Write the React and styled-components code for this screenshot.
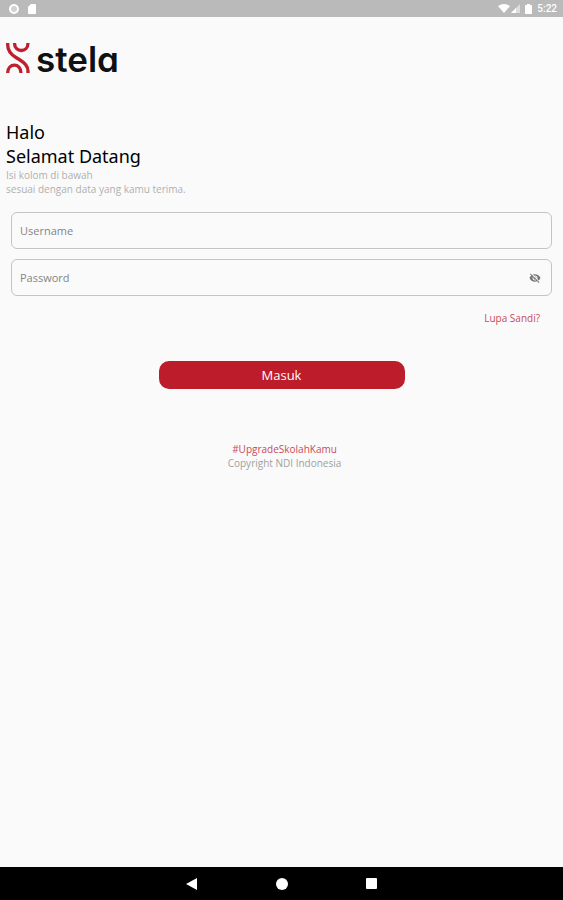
import React from "react";
import styled, { createGlobalStyle } from "styled-components";

const GlobalStyle = createGlobalStyle`
  *, *::before, *::after { box-sizing: border-box; }
  body {
    margin: 0;
    background: #fafafa;
    font-family: "Open Sans", "Noto Sans", sans-serif;
  }
`;

const Screen = styled.div`
  display: flex;
  flex-direction: column;
  min-height: 100vh;
`;

const StatusBar = styled.header`
  display: flex;
  align-items: center;
  justify-content: space-between;
  height: 17px;
  padding: 0 6px 0 8px;
  background: #bababa;
  color: #fff;
`;

const StatusGroup = styled.div`
  display: flex;
  align-items: center;
  gap: ${(p) => p.$gap}px;
  svg { display: block; }
`;

const Clock = styled.time`
  font: 500 10px/16px Roboto, sans-serif;
`;

const Content = styled.main`
  flex: 1;
  display: flex;
  flex-direction: column;
  padding: 24px 6px;
`;

const Brand = styled.div`
  display: flex;
  align-items: center;
  gap: 5px;
  height: 36px;
`;

const Wordmark = styled.span`
  font: 600 35px/36px Inter, sans-serif;
  font-feature-settings: "cv11";
  color: #111;
`;

const Title = styled.h1`
  margin: 43px 0 0;
  font-family: "Noto Sans", "Open Sans", sans-serif;
  font-size: 18px;
  line-height: 24px;
  font-weight: 400;
  color: #000;
`;

const Note = styled.p`
  margin: 0;
  font-size: 10px;
  line-height: 14px;
  color: ${(p) => p.$color || "#b0b0b0"};
`;

const Form = styled.form`
  display: flex;
  flex-direction: column;
  padding: 16px 5px 0;
`;

const Field = styled.div`
  display: flex;
  align-items: center;
  height: 37px;
  margin-bottom: 10px;
  padding: 0 10px 0 8px;
  border: 1px solid #c4c4c4;
  border-radius: 6px;
`;

const Input = styled.input`
  flex: 1;
  min-width: 0;
  padding: 0;
  border: 0;
  outline: 0;
  background: transparent;
  font: 400 11px/18px "Open Sans", sans-serif;
  color: #333;
  &::placeholder { color: #858585; opacity: 1; }
`;

const IconButton = styled.button`
  display: flex;
  padding: 0;
  border: 0;
  background: none;
  color: #777;
`;

const ForgotLink = styled.a`
  align-self: flex-end;
  margin: 5px 12px 0 0;
  font-size: 10px;
  line-height: 14px;
  color: #c94a57;
  text-decoration: none;
`;

const SubmitButton = styled.button`
  align-self: center;
  width: 60%;
  max-width: 246px;
  height: 28px;
  margin-top: 36px;
  padding: 0;
  border: 0;
  border-radius: 10px;
  background: #bd1c2b;
  color: #fff;
  font: 500 13px/18px "Open Sans", sans-serif;
`;

const Footer = styled.footer`
  margin-top: 53px;
  padding-left: 6px;
  text-align: center;
`;

const NavBar = styled.nav`
  display: flex;
  align-items: center;
  justify-content: center;
  gap: 66px;
  height: 33px;
  background: #000;
`;

const NavButton = styled.button`
  display: flex;
  justify-content: center;
  width: 24px;
  padding: 0;
  border: 0;
  background: none;
`;

const LogoMark = () => (
  <svg width="25" height="32" viewBox="0 0 25 32" fill="none" stroke="#c01f2e" strokeWidth="3.3" aria-hidden="true">
    <path d="M1.700 0V2C1.700 8 5 11.500 10 14.500L14 17C19 20 22 23 22 28V30" />
    <path d="M8.500 0C8.500 10 22 10 22 0" />
    <path d="M1.700 30C1.700 19.500 15 19.500 15 30" />
  </svg>
);

const HiddenEye = () => (
  <svg width="12" height="12" viewBox="0 0 24 24" aria-hidden="true">
    <path fill="currentColor" d="M12 7c2.760 0 5 2.240 5 5 0 .65-.13 1.260-.36 1.830l2.920 2.920c1.510-1.260 2.700-2.890 3.430-4.750-1.730-4.390-6-7.500-11-7.500-1.400 0-2.740.25-3.980.7l2.160 2.160C10.740 7.130 11.350 7 12 7zM2 4.270l2.280 2.280.46.46C3.080 8.300 1.780 10.020 1 12c1.730 4.390 6 7.500 11 7.500 1.550 0 3.030-.3 4.380-.84l.42.42L19.730 22 21 20.730 3.270 3 2 4.270zM7.530 9.800l1.550 1.550c-.05.21-.08.43-.08.65 0 1.660 1.340 3 3 3 .22 0 .44-.03.65-.08l1.550 1.550c-.67.33-1.410.53-2.200.53-2.760 0-5-2.240-5-5 0-.79.2-1.530.53-2.200zm4.310-.78l3.150 3.150.02-.16c0-1.660-1.340-3-3-3l-.17.01z" />
  </svg>
);

export default function App() {
  return (
    <>
      <GlobalStyle />
      <Screen>
        <StatusBar>
          <StatusGroup $gap={8}>
            <svg width="12" height="12" viewBox="0 0 12 12" aria-hidden="true">
              <circle cx="6" cy="6" r="4" fill="#d2d2d2" stroke="#fff" strokeWidth="2" />
            </svg>
            <svg width="8" height="10" viewBox="0 0 8 10" aria-hidden="true">
              <path d="M3 0h4a1 1 0 0 1 1 1v8a1 1 0 0 1-1 1H1a1 1 0 0 1-1-1V3z" fill="#fff" />
            </svg>
          </StatusGroup>
          <StatusGroup $gap={4}>
            <StatusGroup $gap={1}>
              <svg width="12" height="9" viewBox="0 0 12 9" aria-hidden="true">
                <path d="M0 2Q6-2 12 2L6 9z" fill="#fff" />
              </svg>
              <svg width="10" height="9" viewBox="0 0 10 9" aria-hidden="true">
                <path d="M0 9L9 0v9z" fill="#dedede" />
                <path d="M0 9L5 4v5z" fill="#fff" />
              </svg>
            </StatusGroup>
            <StatusGroup $gap={5}>
              <svg width="7" height="10" viewBox="0 0 7 10" aria-hidden="true">
                <path d="M2 0h3v1h2v9H0V1h2z" fill="#fff" />
              </svg>
              <Clock>5:22</Clock>
            </StatusGroup>
          </StatusGroup>
        </StatusBar>
        <Content>
          <Brand>
            <LogoMark />
            <Wordmark>stela</Wordmark>
          </Brand>
          <Title>Halo<br />Selamat Datang</Title>
          <Note>Isi kolom di bawah<br />sesuai dengan data yang kamu terima.</Note>
          <Form onSubmit={(e) => e.preventDefault()}>
            <Field>
              <Input type="text" placeholder="Username" aria-label="Username" />
            </Field>
            <Field>
              <Input type="password" placeholder="Password" aria-label="Password" />
              <IconButton type="button" aria-label="Show password"><HiddenEye /></IconButton>
            </Field>
            <ForgotLink href="#">Lupa Sandi?</ForgotLink>
            <SubmitButton type="submit">Masuk</SubmitButton>
          </Form>
          <Footer>
            <Note $color="#c94a57">#UpgradeSkolahKamu</Note>
            <Note $color="#a0a0a0">Copyright NDI Indonesia</Note>
          </Footer>
        </Content>
        <NavBar>
          <NavButton type="button" aria-label="Back">
            <svg width="12" height="12" viewBox="0 0 12 12"><path d="M11 0v12L0 6z" fill="#fff" /></svg>
          </NavButton>
          <NavButton type="button" aria-label="Home">
            <svg width="12" height="12" viewBox="0 0 12 12"><circle cx="6" cy="6" r="6" fill="#fff" /></svg>
          </NavButton>
          <NavButton type="button" aria-label="Recent">
            <svg width="12" height="12" viewBox="0 0 12 12"><rect x="0" y="0" width="11" height="11" rx="1" fill="#fff" /></svg>
          </NavButton>
        </NavBar>
      </Screen>
    </>
  );
}
